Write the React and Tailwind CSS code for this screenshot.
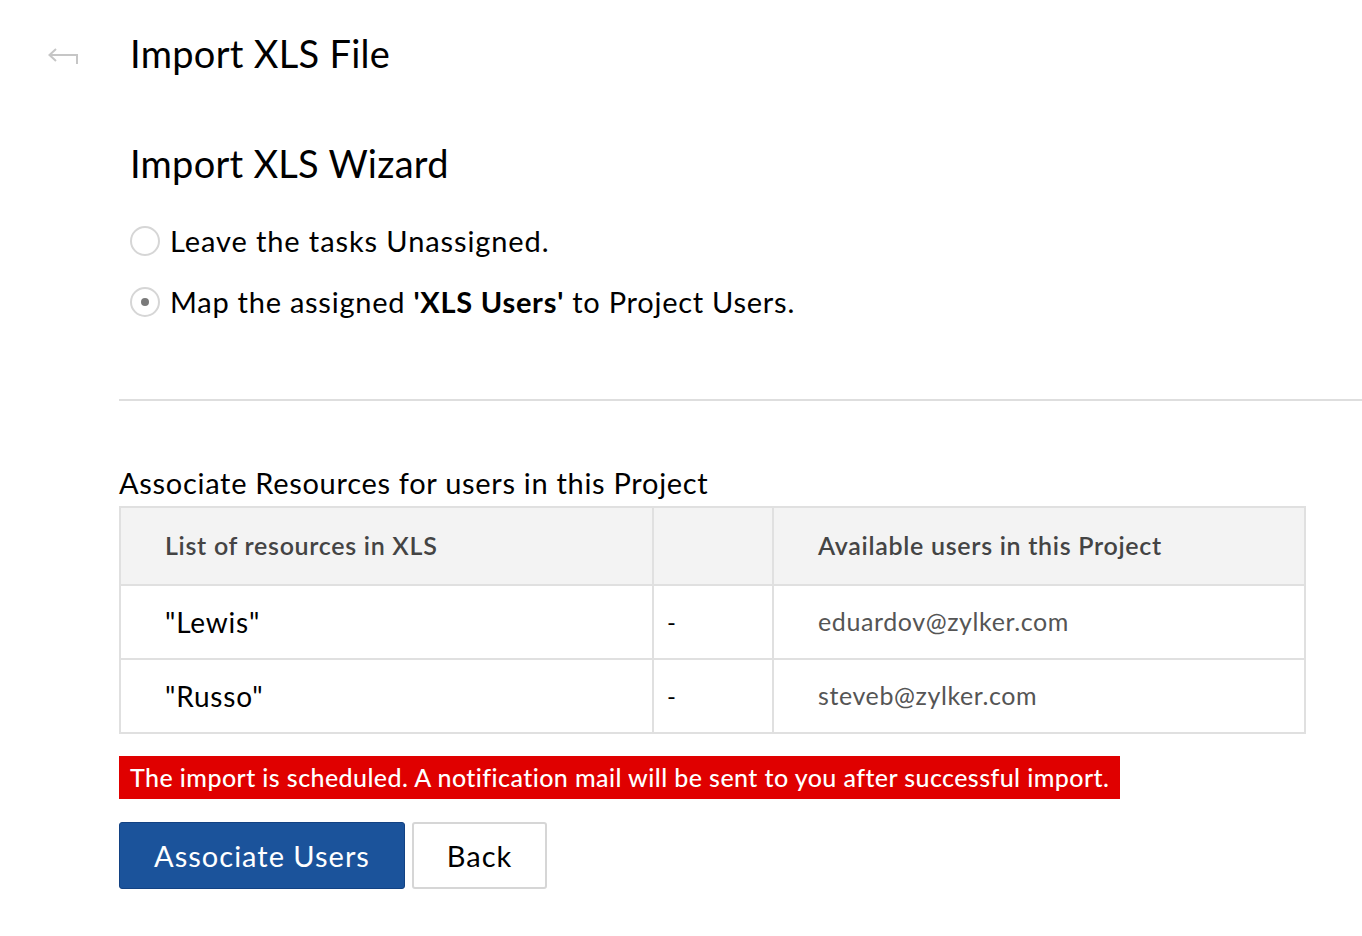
import React, { useState } from 'react'

const rows = [
  { name: '"Lewis"', email: 'eduardov@zylker.com' },
  { name: '"Russo"', email: 'steveb@zylker.com' },
]

function Radio({ checked }) {
  return (
    <span className="w-[30px] h-[30px] rounded-full border-2 border-[#d6d6d6] bg-white flex items-center justify-center shrink-0">
      {checked && <span className="w-[8px] h-[8px] rounded-full bg-[#7a7a7a]" />}
    </span>
  )
}

export default function App() {
  const [mode, setMode] = useState('map')

  return (
    <div className="w-[1362px] h-[936px] bg-white text-black font-['Lato',sans-serif] overflow-hidden">
      {/* ── Header ── */}
      <div className="flex items-center h-[108px] pl-[47px]">
        <svg width="34" height="24" viewBox="0 0 34 24" fill="none" stroke="#c6c6c6" strokeWidth="2" className="mr-[49px]">
          <path d="M9 7 L2.5 13 L9 19" />
          <path d="M2.5 13 H30 V22" />
        </svg>
        <h1 className="text-[38px] leading-none tracking-[0.3px] -mt-[2px]">Import XLS File</h1>
      </div>

      <div className="pl-[130px] pt-[36px]">
        <h2 className="text-[38px] leading-none tracking-[0.25px]">Import XLS Wizard</h2>

        <div className="mt-[44px] flex flex-col gap-[31px]">
          <label className="flex items-center gap-[10px] text-[29px] leading-[30px] tracking-[0.9px] cursor-pointer" onClick={() => setMode('none')}>
            <Radio checked={mode === 'none'} />
            <span>Leave the tasks Unassigned.</span>
          </label>
          <label className="flex items-center gap-[10px] text-[29px] leading-[30px] tracking-[0.75px] cursor-pointer" onClick={() => setMode('map')}>
            <Radio checked={mode === 'map'} />
            <span>Map the assigned <b className="font-bold">'XLS Users'</b> to Project Users.</span>
          </label>
        </div>
      </div>

      <div className="ml-[119px] mt-[82px] border-t-2 border-[#dedede]" />

      {/* ── Resources ── */}
      <div className="pl-[119px] pt-[67px] w-[1306px]">
        <div className="text-[29px] leading-none tracking-[0.7px] mb-[9px]">Associate Resources for users in this Project</div>

        <table className="w-[1187px] border-collapse border-2 border-[#e0e0e0]">
          <thead>
            <tr className="bg-[#f3f3f3] h-[78px]">
              <th className="w-[533px] border-2 border-[#e0e0e0] text-left pl-[44px] text-[25px] tracking-[0.7px] font-semibold text-[#444]">List of resources in XLS</th>
              <th className="w-[120px] border-2 border-[#e0e0e0]" />
              <th className="border-2 border-[#e0e0e0] text-left pl-[44px] text-[25px] tracking-[0.7px] font-semibold text-[#444]">Available users in this Project</th>
            </tr>
          </thead>
          <tbody>
            {rows.map(r => (
              <tr key={r.name} className="h-[74px]">
                <td className="border-2 border-[#e0e0e0] pl-[44px] text-[28px] tracking-[0.8px]">{r.name}</td>
                <td className="border-2 border-[#e0e0e0] pl-[13px] text-[24px]">-</td>
                <td className="border-2 border-[#e0e0e0] pl-[44px] text-[25px] tracking-[0.6px] text-[#555]">{r.email}</td>
              </tr>
            ))}
          </tbody>
        </table>

        <div className="mt-[22px] inline-block bg-[#e00000] text-white text-[25px] font-medium leading-[43px] px-[11px] tracking-[0.42px]">
          The import is scheduled. A notification mail will be sent to you after successful import.
        </div>

        <div className="mt-[23px] flex gap-[7px]">
          <button className="w-[286px] h-[67px] rounded-[3px] bg-[#1b539b] border border-[#134283] text-white text-[29px] tracking-[1px]">Associate Users</button>
          <button className="w-[135px] h-[67px] rounded-[3px] bg-white border-2 border-[#d6d6d6] text-black text-[29px] tracking-[1px]">Back</button>
        </div>
      </div>
    </div>
  )
}
